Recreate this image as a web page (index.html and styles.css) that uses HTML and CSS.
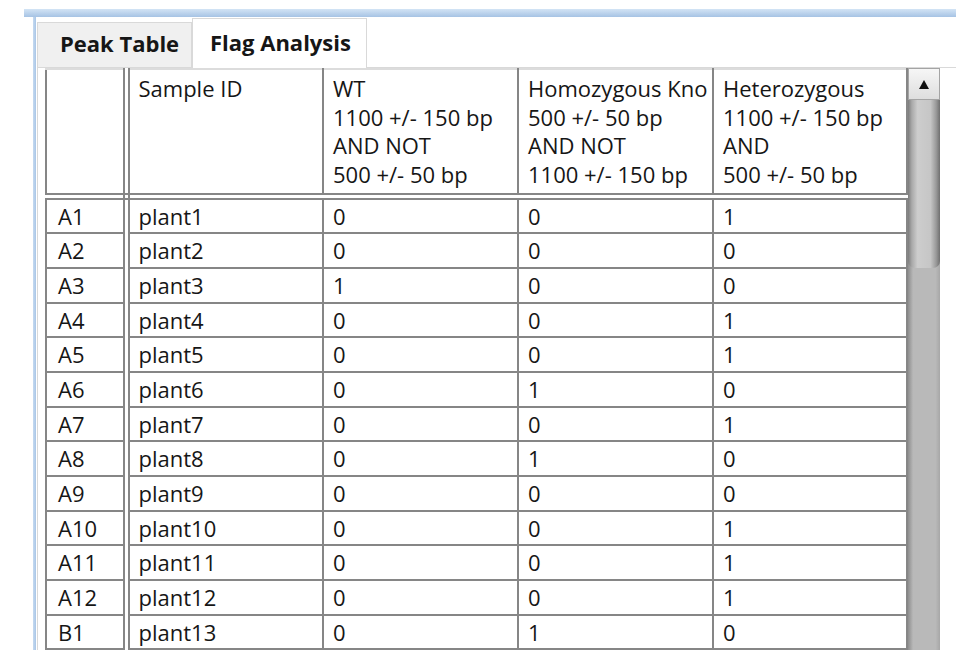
FILE: index.html
```html
<!DOCTYPE html>
<html>
	<head>
		<meta charset="UTF-8">
		<title>Flag Analysis</title>
		<link rel="stylesheet" href="styles.css">
	</head>
	<body>
		<div class="window">
			<div class="caption"></div>
			<div class="client">
				<div class="edge"></div>
				<div class="tabctl">
					<div class="tabstrip">
						<div class="tab tab-peak">Peak Table</div>
						<div class="tab tab-flag active">Flag Analysis</div>
					</div>
					<div class="pane">
						<table class="grid">
							<colgroup>
								<col class="c-row">
								<col class="c-id">
								<col class="c-flag">
								<col class="c-flag">
								<col class="c-last">
							</colgroup>
							<thead>
								<tr>
									<th class="rowhead"></th>
									<th>Sample ID</th>
									<th>WT<br>1100 +/- 150 bp<br>AND NOT<br>500 +/- 50 bp</th>
									<th>Homozygous Kno<br>500 +/- 50 bp<br>AND NOT<br>1100 +/- 150 bp</th>
									<th>Heterozygous<br>1100 +/- 150 bp<br>AND<br>500 +/- 50 bp</th>
								</tr>
							</thead>
							<tbody>
								<tr><td class="rowhead">A1</td><td>plant1</td><td>0</td><td>0</td><td>1</td></tr>
								<tr><td class="rowhead">A2</td><td>plant2</td><td>0</td><td>0</td><td>0</td></tr>
								<tr><td class="rowhead">A3</td><td>plant3</td><td>1</td><td>0</td><td>0</td></tr>
								<tr><td class="rowhead">A4</td><td>plant4</td><td>0</td><td>0</td><td>1</td></tr>
								<tr><td class="rowhead">A5</td><td>plant5</td><td>0</td><td>0</td><td>1</td></tr>
								<tr><td class="rowhead">A6</td><td>plant6</td><td>0</td><td>1</td><td>0</td></tr>
								<tr><td class="rowhead">A7</td><td>plant7</td><td>0</td><td>0</td><td>1</td></tr>
								<tr><td class="rowhead">A8</td><td>plant8</td><td>0</td><td>1</td><td>0</td></tr>
								<tr><td class="rowhead">A9</td><td>plant9</td><td>0</td><td>0</td><td>0</td></tr>
								<tr><td class="rowhead">A10</td><td>plant10</td><td>0</td><td>0</td><td>1</td></tr>
								<tr><td class="rowhead">A11</td><td>plant11</td><td>0</td><td>0</td><td>1</td></tr>
								<tr><td class="rowhead">A12</td><td>plant12</td><td>0</td><td>0</td><td>1</td></tr>
								<tr><td class="rowhead">B1</td><td>plant13</td><td>0</td><td>1</td><td>0</td></tr>
							</tbody>
						</table>
						<div class="vscroll">
							<div class="vscroll-up">
								<svg width="10" height="9" viewBox="0 0 10 9"><polygon points="5,0 10,9 0,9" fill="#111"/></svg>
							</div>
							<div class="vscroll-thumb"></div>
						</div>
					</div>
				</div>
			</div>
		</div>
	</body>
</html>
```

FILE: styles.css
```css
html, body{
	margin:0;
	padding:0;
	height:650px;
	overflow:hidden;
	background:#fff;
}
body{
	font-family:"Open Sans","Noto Sans",sans-serif;
	font-size:22px;
	color:#161616;
}
.window{
	padding:9px 0 0 24px;
	height:641px;
	display:flex;
	flex-direction:column;
}
.caption{
	width:932px;
	height:8px;
	background:linear-gradient(#d3e4f5,#a6c3e4);
}
.client{
	flex:1;
	min-height:0;
	display:flex;
}
.edge{
	width:3px;
	margin-left:9px;
	background:linear-gradient(to right,#c6daf0,#a9c6e7);
}
.tabctl{
	width:919px;
	margin-left:1px;
	display:flex;
	flex-direction:column;
}

/* tabs */
.tabstrip{
	height:50px;
	display:flex;
	align-items:flex-end;
}
.tab{
	box-sizing:border-box;
	height:45px;
	border:1px solid #d9d9d9;
	border-bottom:none;
	background:#f0f0f0;
	font-weight:bold;
	line-height:30px;
	padding-top:5px;
	white-space:nowrap;
}
.tab-peak{
	width:155px;
	padding-left:22px;
}
.tab-flag{
	width:175px;
	padding-left:17px;
}
.tab.active{
	height:50px;
	margin-bottom:-1px;
	padding-top:8px;
	background:#fff;
	position:relative;
}

/* pane */
.pane{
	flex:1;
	min-height:0;
	overflow:hidden;
	display:flex;
	align-items:flex-start;
	border-top:1px solid #d9d9d9;
	border-left:1px solid #d9d9d9;
	padding-left:7px;
}

/* grid */
.grid{
	border-collapse:collapse;
	table-layout:fixed;
	width:863px;
}
.grid .c-row{width:80px;}
.grid .c-id{width:197px;}
.grid .c-flag{width:195px;}
.grid .c-last{width:194px;}
.grid th, .grid td{
	border:2px solid #868686;
	padding:0 0 0 9px;
	white-space:nowrap;
	overflow:hidden;
	text-align:left;
	font-weight:normal;
	line-height:28.5px;
}
.grid thead tr{
	height:127px;
}
.grid th{
	border-top-color:#dcdcdc;
	border-bottom:7px double #868686;
	vertical-align:top;
	padding-top:4px;
}
.grid td{
	height:32.7px;
	vertical-align:middle;
}
.grid .rowhead{
	border-right:7px double #868686;
	padding-left:11px;
}

/* scrollbar */
.vscroll{
	width:32px;
	height:600px;
	display:flex;
	flex-direction:column;
	background:linear-gradient(to right,#8d8d8d,#b9b9b9 16%,#b9b9b9 86%,#a7a7a7);
}
.vscroll-up{
	box-sizing:border-box;
	height:32px;
	border:1px solid #a4a4a4;
	background:linear-gradient(#f6f6f6,#dedede);
	display:flex;
	align-items:center;
	justify-content:center;
}
.vscroll-thumb{
	height:168px;
	border-radius:0 0 7px 7px;
	background:linear-gradient(to right,#7c7c7c,#a9a9a9 12%,#cdcdcd 30%,#c6c6c6 70%,#999 88%,#6f6f6f);
}
```
